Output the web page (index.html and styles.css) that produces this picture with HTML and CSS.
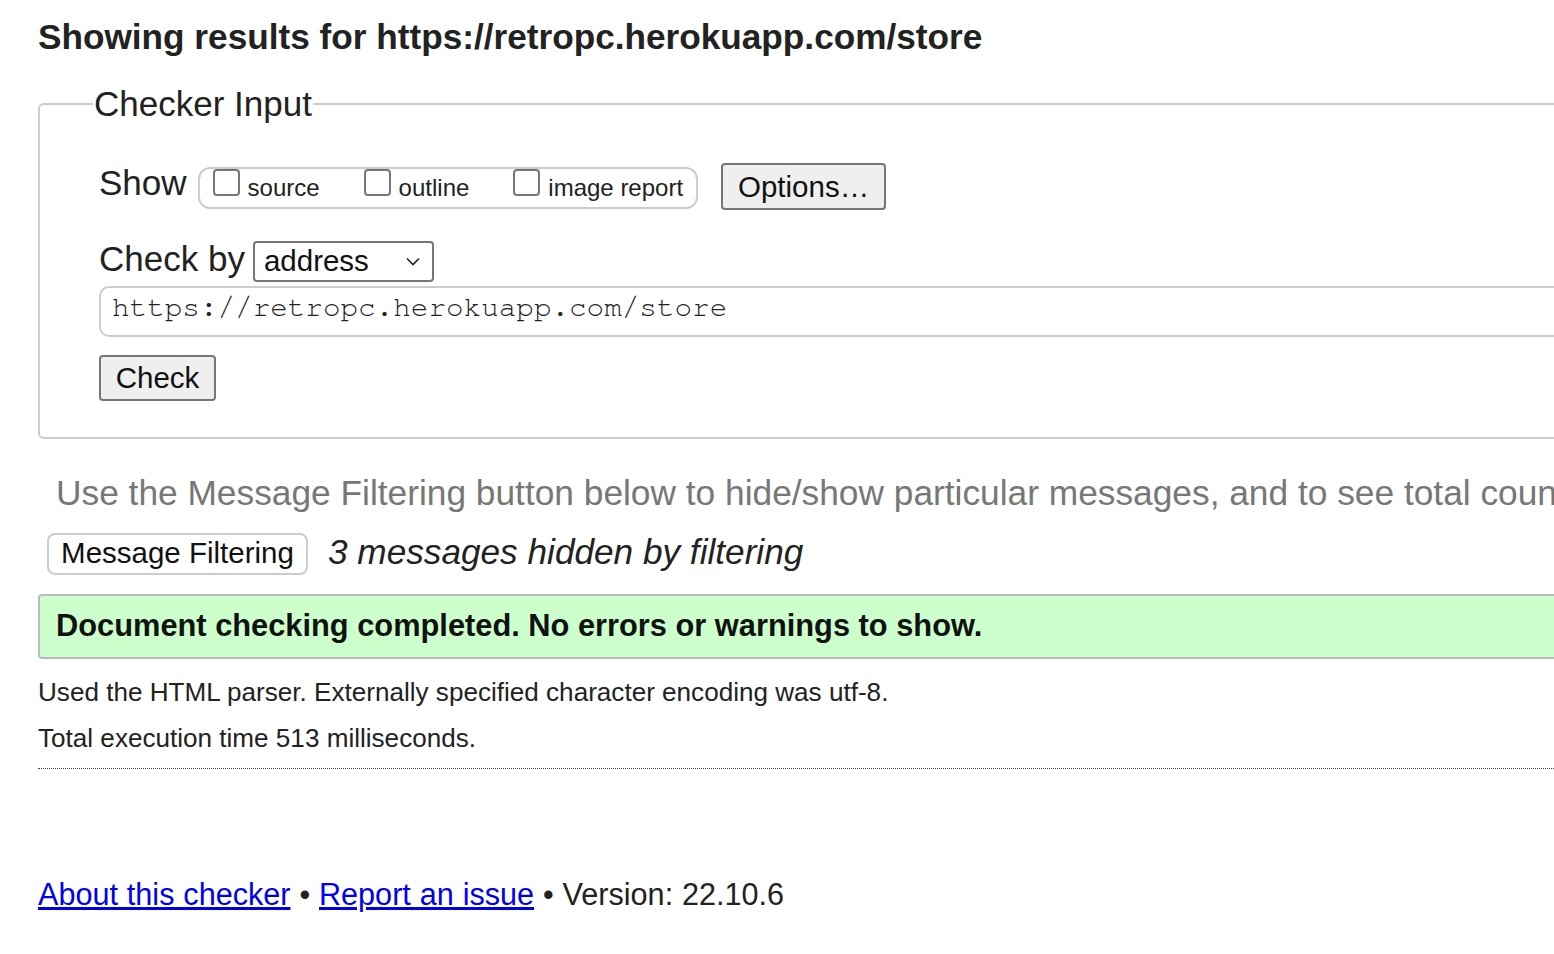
FILE: index.html
```html
<!DOCTYPE html>
<html lang="en">
<head>
<meta charset="utf-8">
<title>Showing results for https://retropc.herokuapp.com/store - Nu Html Checker</title>
<link rel="stylesheet" href="styles.css">
</head>
<body>
<div class="page">
  <h2 class="title">Showing results for https://retropc.herokuapp.com/store</h2>
  <form class="checker">
    <fieldset class="input-set">
      <legend class="legend">Checker Input</legend>
      <div class="show-row">
        <span class="row-label row-label-show">Show</span>
        <div class="show-box">
          <label class="opt"><span class="cb"></span><span class="opt-text">source</span></label>
          <label class="opt"><span class="cb"></span><span class="opt-text">outline</span></label>
          <label class="opt"><span class="cb"></span><span class="opt-text">image report</span></label>
        </div>
        <button type="button" class="btn btn-options">Options…</button>
      </div>
      <div class="checkby-row">
        <span class="row-label row-label-by">Check by</span>
        <div class="select">
          <span>address</span>
          <svg class="chev" width="14" height="9" viewBox="0 0 14 9"><path d="M1 1.5 L7 7.5 L13 1.5" fill="none" stroke="#222" stroke-width="1.6"/></svg>
        </div>
      </div>
      <div class="url">https://retropc.herokuapp.com/store</div>
      <div class="check-row"><button type="button" class="btn btn-check">Check</button></div>
    </fieldset>
  </form>
  <p class="hint">Use the Message Filtering button below to hide/show particular messages, and to see total counts of errors and warnings.</p>
  <div class="filter-row">
    <button type="button" class="btn-filter">Message Filtering</button>
    <span class="hidden-count">3 messages hidden by filtering</span>
  </div>
  <div class="success">Document checking completed. No errors or warnings to show.</div>
  <p class="details">Used the HTML parser. Externally specified character encoding was utf-8.</p>
  <p class="details">Total execution time 513 milliseconds.</p>
  <hr class="sep">
  <p class="footer"><a href="#">About this checker</a> • <a href="#">Report an issue</a> • Version: 22.10.6</p>
</div>
</body>
</html>
```
FILE: styles.css
```css
html, body {
  margin: 0;
  padding: 0;
  overflow: hidden;
  background: #fff;
}
body {
  font-family: "Liberation Sans", Arial, sans-serif;
  color: #222;
}
.page {
  width: 1700px;
  padding: 16px 0 0 38px;
}
.title {
  margin: 0;
  font-size: 35.2px;
  font-weight: bold;
  line-height: 42px;
}
.checker {
  margin-top: 26px;
}
.input-set {
  margin: 0;
  padding: 39px 0 36px 59px;
  border: 2px solid #ccc;
  border-radius: 6px;
  min-width: 0;
}
.legend {
  font-size: 35px;
  padding: 0 1px;
  margin-left: -6px;
  line-height: 40px;
}
.show-row {
  display: flex;
  align-items: center;
  height: 47px;
}
.row-label {
  font-size: 35px;
  margin-right: 11px;
}
.row-label-show {
  margin-bottom: 8px;
}
.row-label-by {
  margin-right: 8px;
  margin-bottom: 5px;
}
.show-box {
  display: flex;
  align-items: flex-start;
  height: 42px;
  box-sizing: border-box;
  border: 2px solid #ccc;
  border-radius: 12px;
  padding: 0 13px 0 13px;
  margin-top: 2px;
}
.opt {
  display: flex;
  align-items: flex-start;
  font-size: 24px;
  line-height: 28px;
  margin-right: 44px;
  color: #222;
}
.opt:last-child { margin-right: 0; }
.cb {
  display: inline-block;
  width: 27px;
  height: 27px;
  box-sizing: border-box;
  border: 2px solid #767676;
  border-radius: 4px;
  margin-right: 8px;
}
.opt-text {
  padding-top: 5px;
}
.btn {
  font-family: "Liberation Sans", Arial, sans-serif;
  background: #efefef;
  border: 2px solid #767676;
  border-radius: 4px;
  color: #111;
  padding: 0;
}
.btn-options {
  margin-left: 23px;
  font-size: 29.5px;
  height: 47px;
  width: 165px;
}
.checkby-row {
  display: flex;
  align-items: center;
  margin-top: 30px;
  height: 42px;
}
.select {
  display: flex;
  align-items: center;
  justify-content: space-between;
  width: 181px;
  height: 41px;
  box-sizing: border-box;
  border: 2px solid #767676;
  border-radius: 4px;
  padding: 0 12px 0 9px;
  font-size: 29.5px;
  color: #111;
}
.url {
  margin-top: 4px;
  height: 51px;
  box-sizing: border-box;
  border: 2px solid #ccc;
  border-radius: 10px;
  padding: 5px 0 0 11px;
  font-family: "Nimbus Mono PS", "FreeMono", "Liberation Mono", "Courier New", monospace;
  font-size: 29.3px;
  color: #222;
}
.check-row {
  margin-top: 18px;
  height: 46px;
}
.btn-check {
  font-size: 29.5px;
  width: 117px;
  height: 46px;
}
.hint {
  margin: 34px 0 0 18px;
  font-size: 35.3px;
  color: #777;
  white-space: nowrap;
  line-height: 40px;
}
.filter-row {
  display: flex;
  align-items: center;
  height: 42px;
  margin: 20px 0 0 9px;
}
.btn-filter {
  font-family: "Liberation Sans", Arial, sans-serif;
  font-size: 29.5px;
  background: #fff;
  border: 2px solid #ccc;
  border-radius: 8px;
  height: 42px;
  width: 261px;
  color: #111;
  padding: 0 0 2px 0;
}
.hidden-count {
  font-style: italic;
  font-size: 35.2px;
  line-height: 40px;
  margin-left: 20px;
  margin-bottom: 5px;
}
.success {
  margin-top: 19px;
  background: #ccffcc;
  border: 2px solid #bbb;
  border-radius: 4px;
  height: 65px;
  box-sizing: border-box;
  padding: 0 0 2px 16px;
  display: flex;
  align-items: center;
  font-size: 30.8px;
  font-weight: bold;
  color: #111;
}
.details {
  margin: 0;
  font-size: 26.1px;
  line-height: 46px;
}
.success + .details { margin-top: 10px; }
.sep {
  margin: 7px 0 0 0;
  border: 0;
  border-top: 1.5px dotted #444;
}
.footer {
  margin: 108px 0 0 0;
  font-size: 30.6px;
  word-spacing: 0.4px;
}
.footer a {
  color: #0000ee;
}
```
